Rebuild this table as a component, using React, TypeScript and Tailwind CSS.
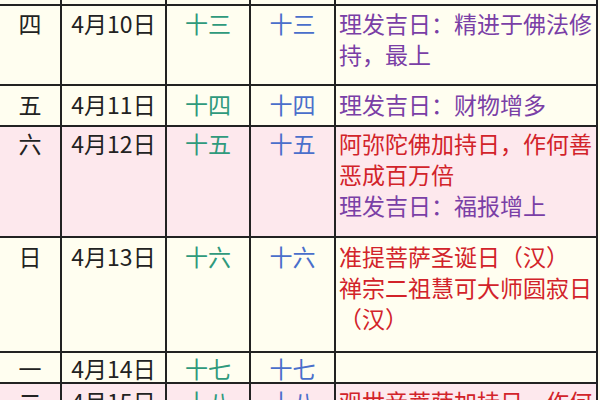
import React from "react";

type Row = {
  day: string;
  date: string;
  a: string;
  b: string;
  desc: React.ReactNode;
  h: string;
  bg: string;
  pt: string;
  extra?: string;
};

const RED = "text-[#d2232a]";
const PURPLE = "text-[#7a3fa6]";

const rows: Row[] = [
  { day: "三", date: "4月9日", a: "十二", b: "十二", desc: "", h: "h-[40px]", bg: "bg-[#fffef0]", pt: "pt-[2px]", extra: "-mt-[34px]" },
  {
    day: "四",
    date: "4月10日",
    a: "十三",
    b: "十三",
    desc: <span className={PURPLE}>理发吉日：精进于佛法修持，最上</span>,
    h: "h-[80px]",
    bg: "bg-[#fffef0]",
    pt: "pt-[2px]",
  },
  {
    day: "五",
    date: "4月11日",
    a: "十四",
    b: "十四",
    desc: <span className={PURPLE}>理发吉日：财物增多</span>,
    h: "h-[41px]",
    bg: "bg-[#fffef0]",
    pt: "pt-[3px]",
  },
  {
    day: "六",
    date: "4月12日",
    a: "十五",
    b: "十五",
    desc: (
      <>
        <div className={RED}>阿弥陀佛加持日，作何善恶成百万倍</div>
        <div className={PURPLE}>理发吉日：福报增上</div>
      </>
    ),
    h: "h-[111px]",
    bg: "bg-[#fde8ed]",
    pt: "pt-[1px]",
  },
  {
    day: "日",
    date: "4月13日",
    a: "十六",
    b: "十六",
    desc: (
      <>
        <div className={RED}>准提菩萨圣诞日（汉）</div>
        <div className={RED}>禅宗二祖慧可大师圆寂日（汉）</div>
      </>
    ),
    h: "h-[115px]",
    bg: "bg-[#fffef0]",
    pt: "pt-[3px]",
  },
  { day: "一", date: "4月14日", a: "十七", b: "十七", desc: "", h: "h-[31px]", bg: "bg-[#fffef0]", pt: "pt-0" },
  {
    day: "二",
    date: "4月15日",
    a: "十八",
    b: "十八",
    desc: <span className={RED}>观世音菩萨加持日，作何善恶成百万倍</span>,
    h: "h-[100px]",
    bg: "bg-[#fde8ed]",
    pt: "pt-[2px]",
  },
];

export default function App() {
  return (
    <div
      className="w-[600px] h-[400px] overflow-hidden bg-[#fffef0] text-[23px] leading-[31px]"
      style={{ fontFamily: '"Noto Sans CJK SC", "Noto Sans", sans-serif' }}
    >
      {rows.map((r, i) => (
        <div
          key={i}
          className={`grid w-[598px] grid-cols-[62px_105px_84px_85px_262px] border-b-2 border-[#222] ${r.h} ${r.bg} ${r.extra ?? ""}`}
        >
          <div className={`border-r-2 border-[#222] text-center text-[#222] ${r.pt}`}>{r.day}</div>
          <div className={`border-r-2 border-[#222] text-center text-[#222] ${r.pt}`}>{r.date}</div>
          <div className={`border-r-2 border-[#222] text-center text-[#2f9a7c] ${r.pt}`}>{r.a}</div>
          <div className={`border-r-2 border-[#222] text-center text-[#4a6fcb] ${r.pt}`}>{r.b}</div>
          <div className={`border-r-2 border-[#222] pl-[3px] pr-[2px] ${r.pt}`}>{r.desc}</div>
        </div>
      ))}
    </div>
  );
}
